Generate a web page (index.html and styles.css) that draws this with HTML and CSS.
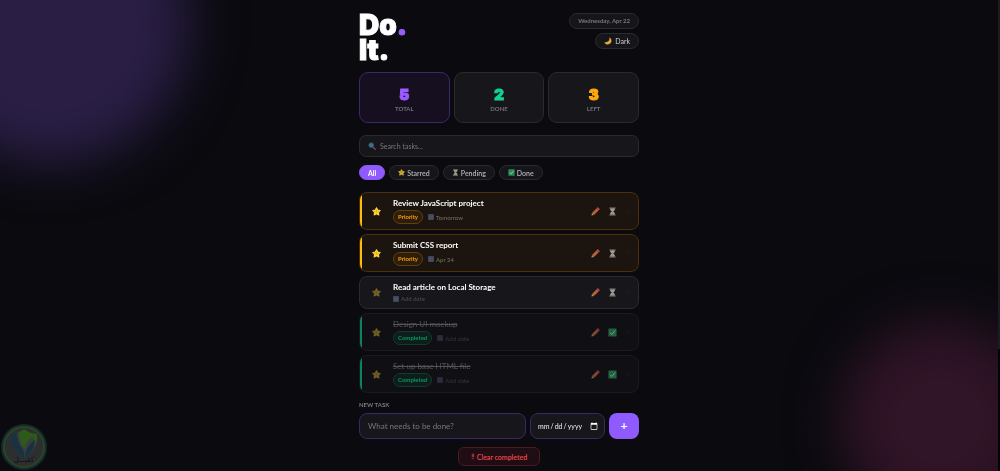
FILE: index.html
```html
<!DOCTYPE html>
<html lang="en">
<head>
    <meta charset="UTF-8">
    <meta name="viewport" content="width=device-width, initial-scale=1.0">
    <title>Do. It.</title>
    <link rel="stylesheet" href="styles.css">
</head>
<body>
    <svg class="sprite" aria-hidden="true">
        <symbol id="star" viewBox="0 0 20 20">
            <path d="M10 1.800l2.600 5 5.600.9-4 4.200.9 5.700-5.100-2.600-5.100 2.600.9-5.700-4-4.200 5.600-.9z" fill="#fdd23a" stroke="#fdd23a" stroke-width="2.600" stroke-linejoin="round"/>
            <path d="M10 7v4.500M7 8.500l-1 2M13.500 10l1 1" stroke="#c99212" stroke-width="1.200" stroke-linecap="round"/>
        </symbol>
        <symbol id="moon" viewBox="0 0 20 20">
            <path d="M13.500.8c1.500 8-3 12.200-12.500 12.700 2.500 5.500 9 6.500 13.500 3.500 5.500-3.600 6-12.400-1-16.200z" fill="#e0a83c"/>
        </symbol>
        <symbol id="search" viewBox="0 0 20 20">
            <path d="M12 12l6 6" stroke="#7b4560" stroke-width="3.500" stroke-linecap="round"/>
            <circle cx="8" cy="8" r="6" fill="#3d7391" stroke="#315064" stroke-width="2"/>
        </symbol>
        <symbol id="hourglass" viewBox="0 0 20 20">
            <path d="M5 3h10v3.500L11.500 10l3.500 3.500V17H5v-3.500L8.500 10 5 6.500z" fill="#b5cede"/>
            <path d="M7.500 6h5L10.500 9v3l2.500 3.500H7l2.500-3.500V9z" fill="#dba548"/>
            <path d="M3 1h14v2.500H3zM3 16.500h14V19H3z" fill="#a59280"/>
        </symbol>
        <symbol id="check" viewBox="0 0 20 20">
            <rect x="1" y="1" width="18" height="18" rx="1.500" fill="#2fa866"/>
            <path d="M4.500 10.500l4 4 7.500-9" fill="none" stroke="#fff" stroke-width="2"/>
        </symbol>
        <symbol id="pencil" viewBox="0 0 20 20">
            <path d="M1 19l1.200-5.500L6.500 17.800z" fill="#d8b48a"/>
            <path d="M2.200 13.500L12 3.200l4.800 4.800L6.500 17.800z" fill="#e0763f"/>
            <path d="M12 3.200l2-2q1-.8 2 0l2.800 2.800q.8 1 0 2l-2 2z" fill="#e8525f"/>
        </symbol>
        <symbol id="calendar" viewBox="0 0 20 20">
            <rect x="1" y="1" width="18" height="18" rx="1" fill="#68788f"/>
            <path d="M1 1h18v5H1z" fill="#4a5a92"/>
            <path d="M4 10h12M4 14h12" stroke="#3a4256" stroke-width="1.500"/>
        </symbol>
        <symbol id="grip" viewBox="0 0 20 20">
            <path d="M6 3v14M13 3v14" stroke="#888894" stroke-width="2" stroke-dasharray="3 2"/>
        </symbol>
        <symbol id="trash" viewBox="0 0 10 20">
            <path d="M3 2v10M7 2v10M3 15v2.500M7 15v2.500" stroke="#e8454a" stroke-width="2.200"/>
        </symbol>
    </svg>

    <div class="blob blob-purple"></div>
    <div class="blob blob-pink"></div>

    <main class="app">
        <header class="header">
            <h1>Do<span>.</span><br>It.</h1>
            <div class="header-right">
                <div class="date">Wednesday, Apr 22</div>
                <button class="theme-btn"><svg class="icon"><use href="#moon"/></svg>Dark</button>
            </div>
        </header>

        <section class="stats">
            <div class="stat total"><strong>5</strong><span>TOTAL</span></div>
            <div class="stat done"><strong>2</strong><span>DONE</span></div>
            <div class="stat left"><strong>3</strong><span>LEFT</span></div>
        </section>

        <label class="search">
            <svg class="icon"><use href="#search"/></svg>
            <input type="text" placeholder="Search tasks..." aria-label="Search tasks">
        </label>

        <nav class="filters">
            <button class="filter active">All</button>
            <button class="filter"><svg class="icon"><use href="#star"/></svg>Starred</button>
            <button class="filter"><svg class="icon"><use href="#hourglass"/></svg>Pending</button>
            <button class="filter"><svg class="icon"><use href="#check"/></svg>Done</button>
        </nav>

        <ul class="tasks">
            <li class="task priority">
                <button class="star" aria-label="Unstar"><svg class="icon-lg"><use href="#star"/></svg></button>
                <div class="task-body">
                    <div class="task-title">Review JavaScript project</div>
                    <div class="meta"><span class="badge">Priority</span><span class="due"><svg class="icon-sm"><use href="#calendar"/></svg>Tomorrow</span></div>
                </div>
                <div class="actions">
                    <button aria-label="Edit"><svg class="icon-lg"><use href="#pencil"/></svg></button>
                    <button aria-label="Mark done"><svg class="icon-lg"><use href="#hourglass"/></svg></button>
                    <svg class="grip"><use href="#grip"/></svg>
                </div>
            </li>
            <li class="task priority">
                <button class="star" aria-label="Unstar"><svg class="icon-lg"><use href="#star"/></svg></button>
                <div class="task-body">
                    <div class="task-title">Submit CSS report</div>
                    <div class="meta"><span class="badge">Priority</span><span class="due"><svg class="icon-sm"><use href="#calendar"/></svg>Apr 24</span></div>
                </div>
                <div class="actions">
                    <button aria-label="Edit"><svg class="icon-lg"><use href="#pencil"/></svg></button>
                    <button aria-label="Mark done"><svg class="icon-lg"><use href="#hourglass"/></svg></button>
                    <svg class="grip"><use href="#grip"/></svg>
                </div>
            </li>
            <li class="task">
                <button class="star" aria-label="Star"><svg class="icon-lg"><use href="#star"/></svg></button>
                <div class="task-body">
                    <div class="task-title">Read article on Local Storage</div>
                    <div class="meta"><span class="due empty"><svg class="icon-sm"><use href="#calendar"/></svg>Add date</span></div>
                </div>
                <div class="actions">
                    <button aria-label="Edit"><svg class="icon-lg"><use href="#pencil"/></svg></button>
                    <button aria-label="Mark done"><svg class="icon-lg"><use href="#hourglass"/></svg></button>
                    <svg class="grip"><use href="#grip"/></svg>
                </div>
            </li>
            <li class="task completed">
                <button class="star" aria-label="Star"><svg class="icon-lg"><use href="#star"/></svg></button>
                <div class="task-body">
                    <div class="task-title">Design UI mockup</div>
                    <div class="meta"><span class="badge">Completed</span><span class="due empty"><svg class="icon-sm"><use href="#calendar"/></svg>Add date</span></div>
                </div>
                <div class="actions">
                    <button aria-label="Edit"><svg class="icon-lg"><use href="#pencil"/></svg></button>
                    <button aria-label="Mark pending"><svg class="icon-lg"><use href="#check"/></svg></button>
                    <svg class="grip"><use href="#grip"/></svg>
                </div>
            </li>
            <li class="task completed">
                <button class="star" aria-label="Star"><svg class="icon-lg"><use href="#star"/></svg></button>
                <div class="task-body">
                    <div class="task-title">Set up base HTML file</div>
                    <div class="meta"><span class="badge">Completed</span><span class="due empty"><svg class="icon-sm"><use href="#calendar"/></svg>Add date</span></div>
                </div>
                <div class="actions">
                    <button aria-label="Edit"><svg class="icon-lg"><use href="#pencil"/></svg></button>
                    <button aria-label="Mark pending"><svg class="icon-lg"><use href="#check"/></svg></button>
                    <svg class="grip"><use href="#grip"/></svg>
                </div>
            </li>
        </ul>

        <form class="new-task">
            <label for="task">NEW TASK</label>
            <div class="new-row">
                <input type="text" id="task" placeholder="What needs to be done?">
                <input type="date" id="due" aria-label="Due date">
                <button type="button" aria-label="Add task">+</button>
            </div>
        </form>

        <button class="clear-btn"><svg><use href="#trash"/></svg>Clear completed</button>
    </main>

    <div class="watermark">
        <svg viewBox="0 0 48 48" aria-hidden="true">
            <circle cx="24" cy="24" r="22" fill="#2d2e32" stroke="#142a30" stroke-width="2"/>
            <circle cx="24" cy="24" r="20" fill="none" stroke="#29461f" stroke-width="2"/>
            <path d="M11 11q7 0 13-5 6 5 13 5 2 15-13 24Q9 26 11 11z" fill="#3a3c40"/>
            <path d="M11 11q4 0 6-1 0 9 5 15 3 4 2 10Q9 26 11 11z" fill="#19323f"/>
            <path d="M19 9q3-1 5-3 6 5 13 5 1 7-2 12 0-6-3-9-6 4-7 12-6-6-6-17z" fill="#2c5a18"/>
            <path d="M35 17q0 11-10 17 0-10 10-17z" fill="#19323f"/>
        </svg>
        <span>كفيـــل</span>
    </div>
    <div class="scrollbar"><div></div></div>
</body>
</html>
```

FILE: styles.css
```css
* {
    box-sizing: border-box;
    margin: 0;
    padding: 0;
}
body {
    background-color: #0a0a0f;
    color: #f2f2f5;
    font-family: Lato, sans-serif;
    font-size: 8px;
    line-height: 10px;
    min-height: 100vh;
    padding-right: 2px;
    overflow: hidden;
}
button, input {
    font: inherit;
    color: inherit;
    border: none;
    background: none;
    outline: none;
}
button {
    cursor: pointer;
}
.sprite {
    display: none;
}
.icon, .icon-sm, .icon-lg, .grip {
    display: block;
    flex: none;
}
.icon {
    width: 8px;
    height: 8px;
}
.icon-sm {
    width: 6px;
    height: 6px;
}
.icon-lg {
    width: 9px;
    height: 9px;
}

/* background glow */
.blob {
    position: fixed;
    border-radius: 50%;
    filter: blur(26px);
    z-index: -1;
}
.blob-purple {
    width: 280px;
    height: 280px;
    top: -116px;
    left: -90px;
    background: #2a1e45;
}
.blob-pink {
    width: 200px;
    height: 200px;
    right: -40px;
    bottom: -50px;
    background: #301427;
}

.app {
    max-width: 280px;
    margin: 0 auto;
    padding-top: 13px;
    display: flex;
    flex-direction: column;
}
.header {
    display: flex;
    justify-content: space-between;
    height: 59px;
}
h1 {
    font-family: Inter, sans-serif;
    font-size: 28px;
    font-weight: 900;
    line-height: 25px;
    color: #fff;
    -webkit-text-stroke: 1px currentColor;
}
h1 span {
    color: #9b5cff;
}
.header-right {
    display: flex;
    flex-direction: column;
    align-items: flex-end;
    gap: 4px;
}
.date, .theme-btn {
    height: 16px;
    padding: 0 8px;
    display: flex;
    align-items: center;
    gap: 3px;
    border: 1px solid #2a2a30;
    border-radius: 8px;
    background: #15151a;
}
.date {
    font-size: 6px;
    font-weight: 700;
    color: #77777f;
}
.theme-btn {
    font-size: 7px;
    color: #d0d0d5;
}

.stats {
    display: grid;
    grid-template-columns: repeat(3, 1fr);
    gap: 4px;
}
.stat {
    height: 51px;
    padding-top: 14px;
    display: flex;
    flex-direction: column;
    align-items: center;
    border: 1px solid #2a2a30;
    border-radius: 9px;
    background: #16161b;
}
.stat strong {
    font-family: Inter, sans-serif;
    font-size: 15px;
    font-weight: 900;
    line-height: 15px;
    -webkit-text-stroke: 1px currentColor;
}
.stat span {
    margin-top: 2px;
    font-size: 6px;
    line-height: 10px;
    font-weight: 700;
    color: #707078;
}
.total {
    background: #150f20;
    border-color: #3d2966;
}
.total strong {
    color: #9b5cff;
}
.done strong {
    color: #12d18e;
}
.left strong {
    color: #ffab0a;
}

.search {
    height: 22px;
    margin-top: 12px;
    padding: 0 8px;
    display: flex;
    align-items: center;
    gap: 4px;
    border: 1px solid #2a2a30;
    border-radius: 7px;
    background: #16161b;
}
.search input {
    flex: 1;
    min-width: 0;
    font-size: 7px;
}
::placeholder {
    color: #77777f;
}
.filters {
    display: flex;
    gap: 4px;
    margin-top: 8px;
}
.filter {
    height: 15px;
    padding: 0 8px;
    display: flex;
    align-items: center;
    gap: 2px;
    border: 1px solid #2a2a30;
    border-radius: 8px;
    background: #15151a;
    color: #b4b4ba;
    font-size: 7px;
    font-weight: 600;
}
.filter.active {
    background: #8f5bff;
    border-color: #8f5bff;
    color: #fff;
    font-weight: 700;
}
.filter .icon {
    width: 7px;
    height: 7px;
    opacity: 0.8;
}

.tasks {
    list-style: none;
    display: flex;
    flex-direction: column;
    gap: 4px;
    margin-top: 12px;
}
.task {
    display: flex;
    align-items: center;
    padding: 5px 7px 5px 12px;
    border: 1px solid #2a2a30;
    border-radius: 8px;
    background: #16161b;
}
.task.priority {
    background: linear-gradient(to right, #ffbb0e 2px, #1c140e 2px);
    border-color: #4b300b;
}
.task.completed {
    background: linear-gradient(to right, #0c8459 2px, #101014 2px);
    border-color: #1a1a1f;
}
.star {
    margin-right: 12px;
}
.task .star {
    opacity: 0.4;
}
.task.priority .star {
    opacity: 1;
}
.task-body {
    flex: 1;
    min-width: 0;
}
.task-title {
    font-size: 8px;
    font-weight: 700;
    line-height: 11px;
    color: #fff;
}
.completed .task-title {
    color: #54545a;
    font-weight: 400;
    text-decoration: line-through;
}
.meta {
    display: flex;
    align-items: center;
    gap: 5px;
    margin-top: 1px;
}
.badge {
    padding: 1px 4px;
    border: 1px solid #633f0c;
    border-radius: 7px;
    background: #2d1d0d;
    color: #ff9d0a;
    font-size: 6px;
    font-weight: 700;
}
.completed .badge {
    background: #0d1d1a;
    border-color: #103b2e;
    color: #0d9566;
}
.due {
    display: flex;
    align-items: center;
    gap: 2px;
    font-size: 6px;
    line-height: 9px;
    color: #77716d;
}
.due.empty {
    color: #4e4e55;
}
.completed .due {
    color: #35353b;
}
.due .icon-sm {
    opacity: 0.7;
}
.completed .due .icon-sm {
    opacity: 0.35;
}
.actions {
    display: flex;
    align-items: center;
    gap: 8px;
}
.actions button {
    opacity: 0.8;
}
.completed .actions button {
    opacity: 0.55;
}
.grip {
    width: 6px;
    height: 6px;
    opacity: 0.15;
}

.new-task {
    margin-top: 7px;
}
.new-task label {
    display: block;
    font-size: 6px;
    font-weight: 700;
    color: #7a7a82;
}
.new-row {
    display: flex;
    gap: 4px;
    margin-top: 3px;
}
.new-row input {
    height: 26px;
    padding: 0 8px;
    border: 1px solid #392a66;
    border-radius: 8px;
    background: #16161b;
}
.new-row input[type="text"] {
    flex: 1;
    min-width: 0;
}
.new-row input[type="date"] {
    width: 75px;
    padding: 0 6px;
    font-size: 7px;
    color-scheme: dark;
}
::-webkit-calendar-picker-indicator {
    width: 8px;
    height: 8px;
    padding: 0;
    margin: 0;
}
.new-row button {
    width: 30px;
    border-radius: 8px;
    background: #8f5bff;
    color: #fff;
    font-size: 12px;
    font-weight: 700;
}
.clear-btn {
    align-self: center;
    height: 19px;
    margin-top: 8px;
    padding: 0 12px;
    display: flex;
    align-items: center;
    gap: 2px;
    border: 1px solid #4c1a22;
    border-radius: 6px;
    background: #1f0d13;
    color: #f04a4f;
    font-size: 7px;
    font-weight: 600;
}
.clear-btn svg {
    width: 4px;
    height: 7px;
}

.watermark {
    position: fixed;
    left: 0;
    bottom: 0;
    width: 48px;
    height: 48px;
}
.watermark svg {
    display: block;
}
.watermark span {
    position: absolute;
    left: 0;
    right: 0;
    bottom: 6px;
    font-family: 'DejaVu Sans', sans-serif;
    font-size: 7px;
    text-align: center;
    color: #0f1013;
}
.scrollbar {
    position: fixed;
    top: 0;
    right: 0;
    bottom: 0;
    width: 2px;
    background: #050508;
}
.scrollbar div {
    height: 74%;
    background: #1b1b20;
}
```
